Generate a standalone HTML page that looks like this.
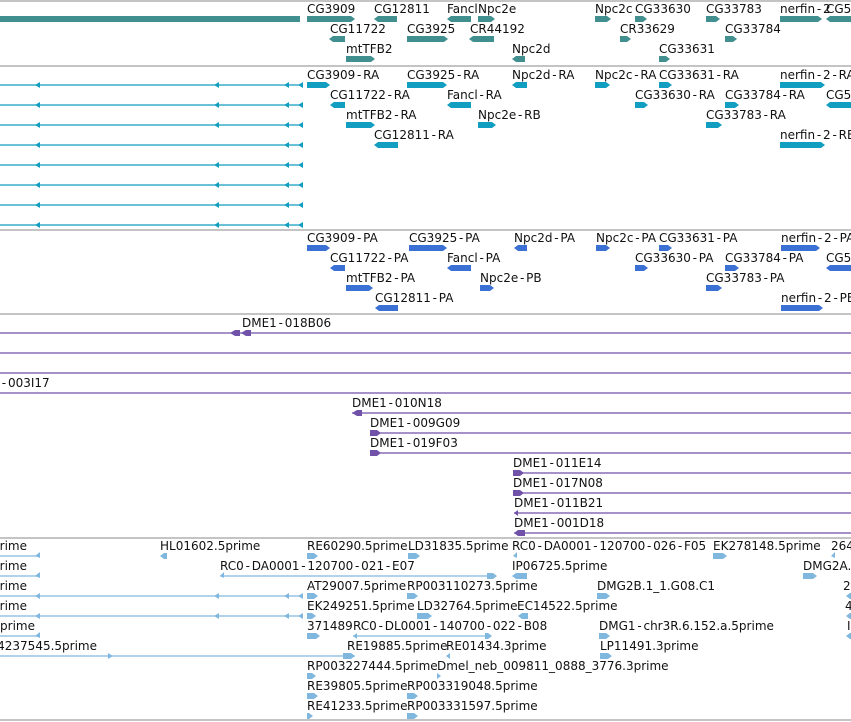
<!DOCTYPE html>
<html><head><meta charset="utf-8"><style>
html,body{margin:0;padding:0;background:#fff;width:851px;height:722px;overflow:hidden}
svg{display:block}
text{font-family:"DejaVu Sans","Liberation Sans",sans-serif;font-size:12px;fill:#111}
.h{letter-spacing:1.8px}
.tl{fill:#428f90}.cy{fill:#119ec0}.bl{fill:#3b70d4}.pu{fill:#7052a8}.es{fill:#80b7df}
.sep{stroke:#c4c4c4;stroke-width:2}
.lc{stroke:#119ec0;stroke-width:1.3}.lp{stroke:#7052a8;stroke-width:1.3}.le{stroke:#80b7df;stroke-width:1.3}
</style></head><body>
<svg width="851" height="722" viewBox="0 0 851 722">
<line class="sep" x1="0" y1="1" x2="851" y2="1"/>
<line class="sep" x1="0" y1="66" x2="851" y2="66"/>
<line class="sep" x1="0" y1="230" x2="851" y2="230"/>
<line class="sep" x1="0" y1="314" x2="851" y2="314"/>
<line class="sep" x1="0" y1="538" x2="851" y2="538"/>
<line class="sep" x1="0" y1="720" x2="851" y2="720"/>

<g class="tl">
<rect x="0" y="16" width="300" height="6"/>
<polygon points="307,16 351,16 355,19 351,22 307,22"/>
<polygon points="374,19 378,16 397,16 397,22 378,22"/>
<polygon points="447,19 451,16 471,16 471,22 451,22"/>
<polygon points="478,16 491,16 495,19 491,22 478,22"/>
<polygon points="595,16 607,16 611,19 607,22 595,22"/>
<polygon points="635,16 643,16 647,19 643,22 635,22"/>
<polygon points="706,16 716,16 720,19 716,22 706,22"/>
<polygon points="780,16 818,16 822,19 818,22 780,22"/>
<polygon points="826,19 830,16 851,16 851,22 830,22"/>
<polygon points="329,39 333,36 345,36 345,42 333,42"/>
<polygon points="407,36 444,36 448,39 444,42 407,42"/>
<polygon points="469,39 473,36 494,36 494,42 473,42"/>
<polygon points="620,36 627,36 631,39 627,42 620,42"/>
<polygon points="725,36 733,36 737,39 733,42 725,42"/>
<polygon points="346,56 371,56 375,59 371,62 346,62"/>
<polygon points="512,59 516,56 525,56 525,62 516,62"/>
<polygon points="659,56 666,56 670,59 666,62 659,62"/>
</g>
<text x="307" y="13">CG3909</text><text x="374" y="13">CG12811</text><text x="447" y="13">Fancl</text><text x="478" y="13">Npc2e</text>
<text x="595" y="13">Npc2c</text><text x="635" y="13">CG33630</text><text x="706" y="13">CG33783</text><text x="780" y="13">nerfin<tspan class="h" dx="1.8">-</tspan>2</text><text x="826" y="13">CG5</text>
<text x="330" y="33">CG11722</text><text x="407" y="33">CG3925</text><text x="470" y="33">CR44192</text><text x="620" y="33">CR33629</text><text x="725" y="33">CG33784</text>
<text x="346" y="53">mtTFB2</text><text x="512" y="53">Npc2d</text><text x="659" y="53">CG33631</text>

<g>
<line class="lc" x1="0" y1="85" x2="303" y2="85"/><line class="lc" x1="0" y1="105" x2="303" y2="105"/>
<line class="lc" x1="0" y1="125" x2="303" y2="125"/><line class="lc" x1="0" y1="145" x2="303" y2="145"/>
<line class="lc" x1="0" y1="165" x2="303" y2="165"/><line class="lc" x1="0" y1="185" x2="303" y2="185"/>
<line class="lc" x1="0" y1="205" x2="303" y2="205"/><line class="lc" x1="0" y1="225" x2="303" y2="225"/>
</g>
<g class="cy">
<polygon points="35,85 40,82 40,88"/><polygon points="214,85 219,82 219,88"/><polygon points="284,85 289,82 289,88"/><polygon points="298,85 303,82 303,88"/>
<polygon points="35,105 40,102 40,108"/><polygon points="214,105 219,102 219,108"/><polygon points="284,105 289,102 289,108"/><polygon points="298,105 303,102 303,108"/>
<polygon points="35,125 40,122 40,128"/><polygon points="214,125 219,122 219,128"/><polygon points="284,125 289,122 289,128"/><polygon points="298,125 303,122 303,128"/>
<polygon points="35,145 40,142 40,148"/><polygon points="284,145 289,142 289,148"/><polygon points="298,145 303,142 303,148"/>
<polygon points="35,165 40,162 40,168"/><polygon points="214,165 219,162 219,168"/><polygon points="284,165 289,162 289,168"/><polygon points="298,165 303,162 303,168"/>
<polygon points="35,185 40,182 40,188"/><polygon points="214,185 219,182 219,188"/><polygon points="284,185 289,182 289,188"/><polygon points="298,185 303,182 303,188"/>
<polygon points="35,205 40,202 40,208"/><polygon points="214,205 219,202 219,208"/><polygon points="284,205 289,202 289,208"/><polygon points="298,205 303,202 303,208"/>
<polygon points="35,225 40,222 40,228"/><polygon points="214,225 219,222 219,228"/><polygon points="284,225 289,222 289,228"/><polygon points="298,225 303,222 303,228"/>
<polygon points="307,82 326,82 330,85 326,88 307,88"/>
<polygon points="407,82 443,82 447,85 443,88 407,88"/>
<polygon points="512,85 516,82 527,82 527,88 516,88"/>
<polygon points="595,82 606,82 610,85 606,88 595,88"/>
<polygon points="659,82 668,82 672,85 668,88 659,88"/>
<polygon points="780,82 821,82 825,85 821,88 780,88"/>
<polygon points="330,105 334,102 345,102 345,108 334,108"/>
<polygon points="447,105 451,102 471,102 471,108 451,108"/>
<polygon points="635,102 644,102 648,105 644,108 635,108"/>
<polygon points="725,102 735,102 739,105 735,108 725,108"/>
<polygon points="826,105 830,102 851,102 851,108 830,108"/>
<polygon points="346,122 371,122 375,125 371,128 346,128"/>
<polygon points="478,122 492,122 496,125 492,128 478,128"/>
<polygon points="706,122 718,122 722,125 718,128 706,128"/>
<polygon points="374,145 378,142 398,142 398,148 378,148"/>
<polygon points="780,142 821,142 825,145 821,148 780,148"/>
</g>
<text x="307" y="79">CG3909<tspan class="h" dx="1.8">-</tspan>RA</text><text x="407" y="79">CG3925<tspan class="h" dx="1.8">-</tspan>RA</text><text x="512" y="79">Npc2d<tspan class="h" dx="1.8">-</tspan>RA</text><text x="595" y="79">Npc2c<tspan class="h" dx="1.8">-</tspan>RA</text><text x="659" y="79">CG33631<tspan class="h" dx="1.8">-</tspan>RA</text><text x="780" y="79">nerfin<tspan class="h" dx="1.8">-</tspan>2<tspan class="h" dx="1.8">-</tspan>RA</text>
<text x="330" y="99">CG11722<tspan class="h" dx="1.8">-</tspan>RA</text><text x="447" y="99">Fancl<tspan class="h" dx="1.8">-</tspan>RA</text><text x="635" y="99">CG33630<tspan class="h" dx="1.8">-</tspan>RA</text><text x="725" y="99">CG33784<tspan class="h" dx="1.8">-</tspan>RA</text><text x="826" y="99">CG5</text>
<text x="346" y="119">mtTFB2<tspan class="h" dx="1.8">-</tspan>RA</text><text x="478" y="119">Npc2e<tspan class="h" dx="1.8">-</tspan>RB</text><text x="706" y="119">CG33783<tspan class="h" dx="1.8">-</tspan>RA</text>
<text x="374" y="139">CG12811<tspan class="h" dx="1.8">-</tspan>RA</text><text x="780" y="139">nerfin<tspan class="h" dx="1.8">-</tspan>2<tspan class="h" dx="1.8">-</tspan>RB</text>

<g class="bl">
<polygon points="307,245 326,245 330,248 326,251 307,251"/>
<polygon points="409,245 443,245 447,248 443,251 409,251"/>
<polygon points="514,248 518,245 527,245 527,251 518,251"/>
<polygon points="596,245 606,245 610,248 606,251 596,251"/>
<polygon points="659,245 668,245 672,248 668,251 659,251"/>
<polygon points="781,245 816,245 820,248 816,251 781,251"/>
<polygon points="330,268 334,265 345,265 345,271 334,271"/>
<polygon points="447,268 451,265 471,265 471,271 451,271"/>
<polygon points="635,265 644,265 648,268 644,271 635,271"/>
<polygon points="725,265 735,265 739,268 735,271 725,271"/>
<polygon points="826,268 830,265 851,265 851,271 830,271"/>
<polygon points="346,285 369,285 373,288 369,291 346,291"/>
<polygon points="480,285 490,285 494,288 490,291 480,291"/>
<polygon points="706,285 718,285 722,288 718,291 706,291"/>
<polygon points="375,308 379,305 398,305 398,311 379,311"/>
<polygon points="781,305 819,305 823,308 819,311 781,311"/>
</g>
<text x="307" y="242">CG3909<tspan class="h" dx="1.8">-</tspan>PA</text><text x="409" y="242">CG3925<tspan class="h" dx="1.8">-</tspan>PA</text><text x="514" y="242">Npc2d<tspan class="h" dx="1.8">-</tspan>PA</text><text x="596" y="242">Npc2c<tspan class="h" dx="1.8">-</tspan>PA</text><text x="659" y="242">CG33631<tspan class="h" dx="1.8">-</tspan>PA</text><text x="781" y="242">nerfin<tspan class="h" dx="1.8">-</tspan>2<tspan class="h" dx="1.8">-</tspan>PA</text>
<text x="330" y="262">CG11722<tspan class="h" dx="1.8">-</tspan>PA</text><text x="447" y="262">Fancl<tspan class="h" dx="1.8">-</tspan>PA</text><text x="635" y="262">CG33630<tspan class="h" dx="1.8">-</tspan>PA</text><text x="725" y="262">CG33784<tspan class="h" dx="1.8">-</tspan>PA</text><text x="826" y="262">CG5</text>
<text x="346" y="282">mtTFB2<tspan class="h" dx="1.8">-</tspan>PA</text><text x="480" y="282">Npc2e<tspan class="h" dx="1.8">-</tspan>PB</text><text x="706" y="282">CG33783<tspan class="h" dx="1.8">-</tspan>PA</text>
<text x="375" y="302">CG12811<tspan class="h" dx="1.8">-</tspan>PA</text><text x="781" y="302">nerfin<tspan class="h" dx="1.8">-</tspan>2<tspan class="h" dx="1.8">-</tspan>PB</text>

<g>
<line class="lp" x1="0" y1="333" x2="851" y2="333"/><line class="lp" x1="0" y1="353" x2="851" y2="353"/>
<line class="lp" x1="0" y1="373" x2="851" y2="373"/><line class="lp" x1="0" y1="393" x2="851" y2="393"/>
<line class="lp" x1="352" y1="413" x2="851" y2="413"/><line class="lp" x1="370" y1="433" x2="851" y2="433"/>
<line class="lp" x1="370" y1="453" x2="851" y2="453"/><line class="lp" x1="513" y1="473" x2="851" y2="473"/>
<line class="lp" x1="513" y1="493" x2="851" y2="493"/><line class="lp" x1="514" y1="513" x2="851" y2="513"/>
<line class="lp" x1="514" y1="533" x2="851" y2="533"/>
</g>
<g class="pu">
<polygon points="230,333 235,330 240,330 240,336 235,336"/>
<polygon points="241,333 246,330 251,330 251,336 246,336"/>
<polygon points="352,413 357,410 362,410 362,416 357,416"/>
<polygon points="370,430 377,430 381,433 377,436 370,436"/>
<polygon points="370,450 377,450 381,453 377,456 370,456"/>
<polygon points="513,470 520,470 524,473 520,476 513,476"/>
<polygon points="513,490 520,490 524,493 520,496 513,496"/>
<polygon points="514,513 518,510 518,516"/>
<polygon points="514,533 518,530 525,530 525,536 518,536"/>
</g>
<text x="242" y="327">DME1<tspan class="h" dx="1.8">-</tspan>018B06</text>
<text x="0" y="387"><tspan class="h" dx="1.8">-</tspan>003I17</text>
<text x="352" y="407">DME1<tspan class="h" dx="1.8">-</tspan>010N18</text><text x="370" y="427">DME1<tspan class="h" dx="1.8">-</tspan>009G09</text><text x="370" y="447">DME1<tspan class="h" dx="1.8">-</tspan>019F03</text>
<text x="513" y="467">DME1<tspan class="h" dx="1.8">-</tspan>011E14</text><text x="513" y="487">DME1<tspan class="h" dx="1.8">-</tspan>017N08</text><text x="514" y="507">DME1<tspan class="h" dx="1.8">-</tspan>011B21</text><text x="514" y="527">DME1<tspan class="h" dx="1.8">-</tspan>001D18</text>

<g>
<line class="le" x1="0" y1="556" x2="38" y2="556"/>
<line class="le" x1="0" y1="576" x2="38" y2="576"/>
<line class="le" x1="220" y1="576" x2="495" y2="576"/>
<line class="le" x1="0" y1="596" x2="303" y2="596"/>
<line class="le" x1="0" y1="616" x2="303" y2="616"/>
<line class="le" x1="0" y1="636" x2="38" y2="636"/>
<line class="le" x1="353" y1="636" x2="490" y2="636"/>
<line class="le" x1="0" y1="656" x2="355" y2="656"/>
</g>
<g class="es">
<polygon points="35,556 40,552 40,558"/><polygon points="35,576 40,572 40,578"/><polygon points="35,636 40,632 40,638"/>
<polygon points="160,556 164,553 167,553 167,559 164,559"/>
<polygon points="307,553 314,553 318,556 314,559 307,559"/>
<polygon points="408,553 416,553 420,556 416,559 408,559"/>
<polygon points="513,556 517,552 517,558"/>
<polygon points="713,553 723,553 727,556 723,559 713,559"/>
<polygon points="831,556 835,552 835,558"/>
<polygon points="220,576 224,572 224,578"/>
<polygon points="487,573 493,573 497,576 493,579 487,579"/>
<polygon points="512,576 516,573 527,573 527,579 516,579"/>
<polygon points="803,573 813,573 817,576 813,579 803,579"/>
<polygon points="35,596 40,593 40,599"/><polygon points="214,596 219,593 219,599"/><polygon points="284,596 289,593 289,599"/><polygon points="298,596 303,593 303,599"/>
<polygon points="307,593 314,593 318,596 314,599 307,599"/>
<polygon points="407,593 414,593 418,596 414,599 407,599"/>
<polygon points="597,593 606,593 610,596 606,599 597,599"/>
<polygon points="846,596 850,593 851,593 851,599 850,599"/>
<polygon points="35,616 40,613 40,619"/><polygon points="214,616 219,613 219,619"/><polygon points="284,616 289,613 289,619"/><polygon points="298,616 303,613 303,619"/>
<polygon points="307,613 312,613 316,616 312,619 307,619"/>
<polygon points="417,613 428,613 432,616 428,619 417,619"/>
<polygon points="518,616 522,613 528,613 528,619 522,619"/>
<polygon points="846,616 850,613 851,613 851,619 850,619"/>
<polygon points="307,633 316,633 320,636 316,639 307,639"/>
<polygon points="353,636 357,633 357,639"/>
<polygon points="485,633 488,633 492,636 488,639 485,639"/>
<polygon points="599,633 606,633 610,636 606,639 599,639"/>
<polygon points="846,636 850,633 851,633 851,639 850,639"/>
<polygon points="108,653 113,656 108,659"/>
<polygon points="343,653 351,653 355,656 351,659 343,659"/>
<polygon points="446,656 450,653 450,659"/>
<polygon points="600,653 608,653 612,656 608,659 600,659"/>
<polygon points="307,673 312,673 316,676 312,679 307,679"/>
<polygon points="437,673 441,676 437,679"/>
<polygon points="307,693 314,693 318,696 314,699 307,699"/>
<polygon points="407,693 414,693 418,696 414,699 407,699"/>
<polygon points="307,713 309,713 313,716 309,719 307,719"/>
<polygon points="407,713 414,713 418,716 414,719 407,719"/>
</g>
<text x="27" y="550" text-anchor="end">8765.5prime</text>
<text x="160" y="550">HL01602.5prime</text><text x="307" y="550">RE60290.5prime</text><text x="408" y="550">LD31835.5prime</text>
<text x="512" y="550">RC0<tspan class="h" dx="1.8">-</tspan>DA0001<tspan class="h" dx="1.8">-</tspan>120700<tspan class="h" dx="1.8">-</tspan>026<tspan class="h" dx="1.8">-</tspan>F05</text><text x="713" y="550">EK278148.5prime</text><text x="831" y="550">264</text>
<text x="27" y="570" text-anchor="end">8765.5prime</text>
<text x="220" y="570">RC0<tspan class="h" dx="1.8">-</tspan>DA0001<tspan class="h" dx="1.8">-</tspan>120700<tspan class="h" dx="1.8">-</tspan>021<tspan class="h" dx="1.8">-</tspan>E07</text><text x="512" y="570">IP06725.5prime</text><text x="803" y="570">DMG2A.</text>
<text x="27" y="590" text-anchor="end">8765.5prime</text>
<text x="307" y="590">AT29007.5prime</text><text x="407" y="590">RP003110273.5prime</text><text x="597" y="590">DMG2B.1_1.G08.C1</text><text x="843" y="590">2</text>
<text x="27" y="610" text-anchor="end">8765.5prime</text>
<text x="307" y="610">EK249251.5prime</text><text x="417" y="610">LD32764.5prime</text><text x="517" y="610">EC14522.5prime</text><text x="845" y="610">4</text>
<text x="35" y="630" text-anchor="end">876 prime</text>
<text x="307" y="630">371489</text><text x="353" y="630">RC0<tspan class="h" dx="1.8">-</tspan>DL0001<tspan class="h" dx="1.8">-</tspan>140700<tspan class="h" dx="1.8">-</tspan>022<tspan class="h" dx="1.8">-</tspan>B08</text><text x="599" y="630">DMG1<tspan class="h" dx="1.8">-</tspan>chr3R.6.152.a.5prime</text><text x="847" y="630">I</text>
<text x="97" y="650" text-anchor="end">X4237545.5prime</text>
<text x="347" y="650">RE19885.5prime</text><text x="446" y="650">RE01434.3prime</text><text x="600" y="650">LP11491.3prime</text>
<text x="307" y="670">RP003227444.5prime</text><text x="437" y="670">Dmel_neb_009811_0888_3776.3prime</text>
<text x="307" y="690">RE39805.5prime</text><text x="407" y="690">RP003319048.5prime</text>
<text x="307" y="710">RE41233.5prime</text><text x="407" y="710">RP003331597.5prime</text>
</svg>
</body></html>
